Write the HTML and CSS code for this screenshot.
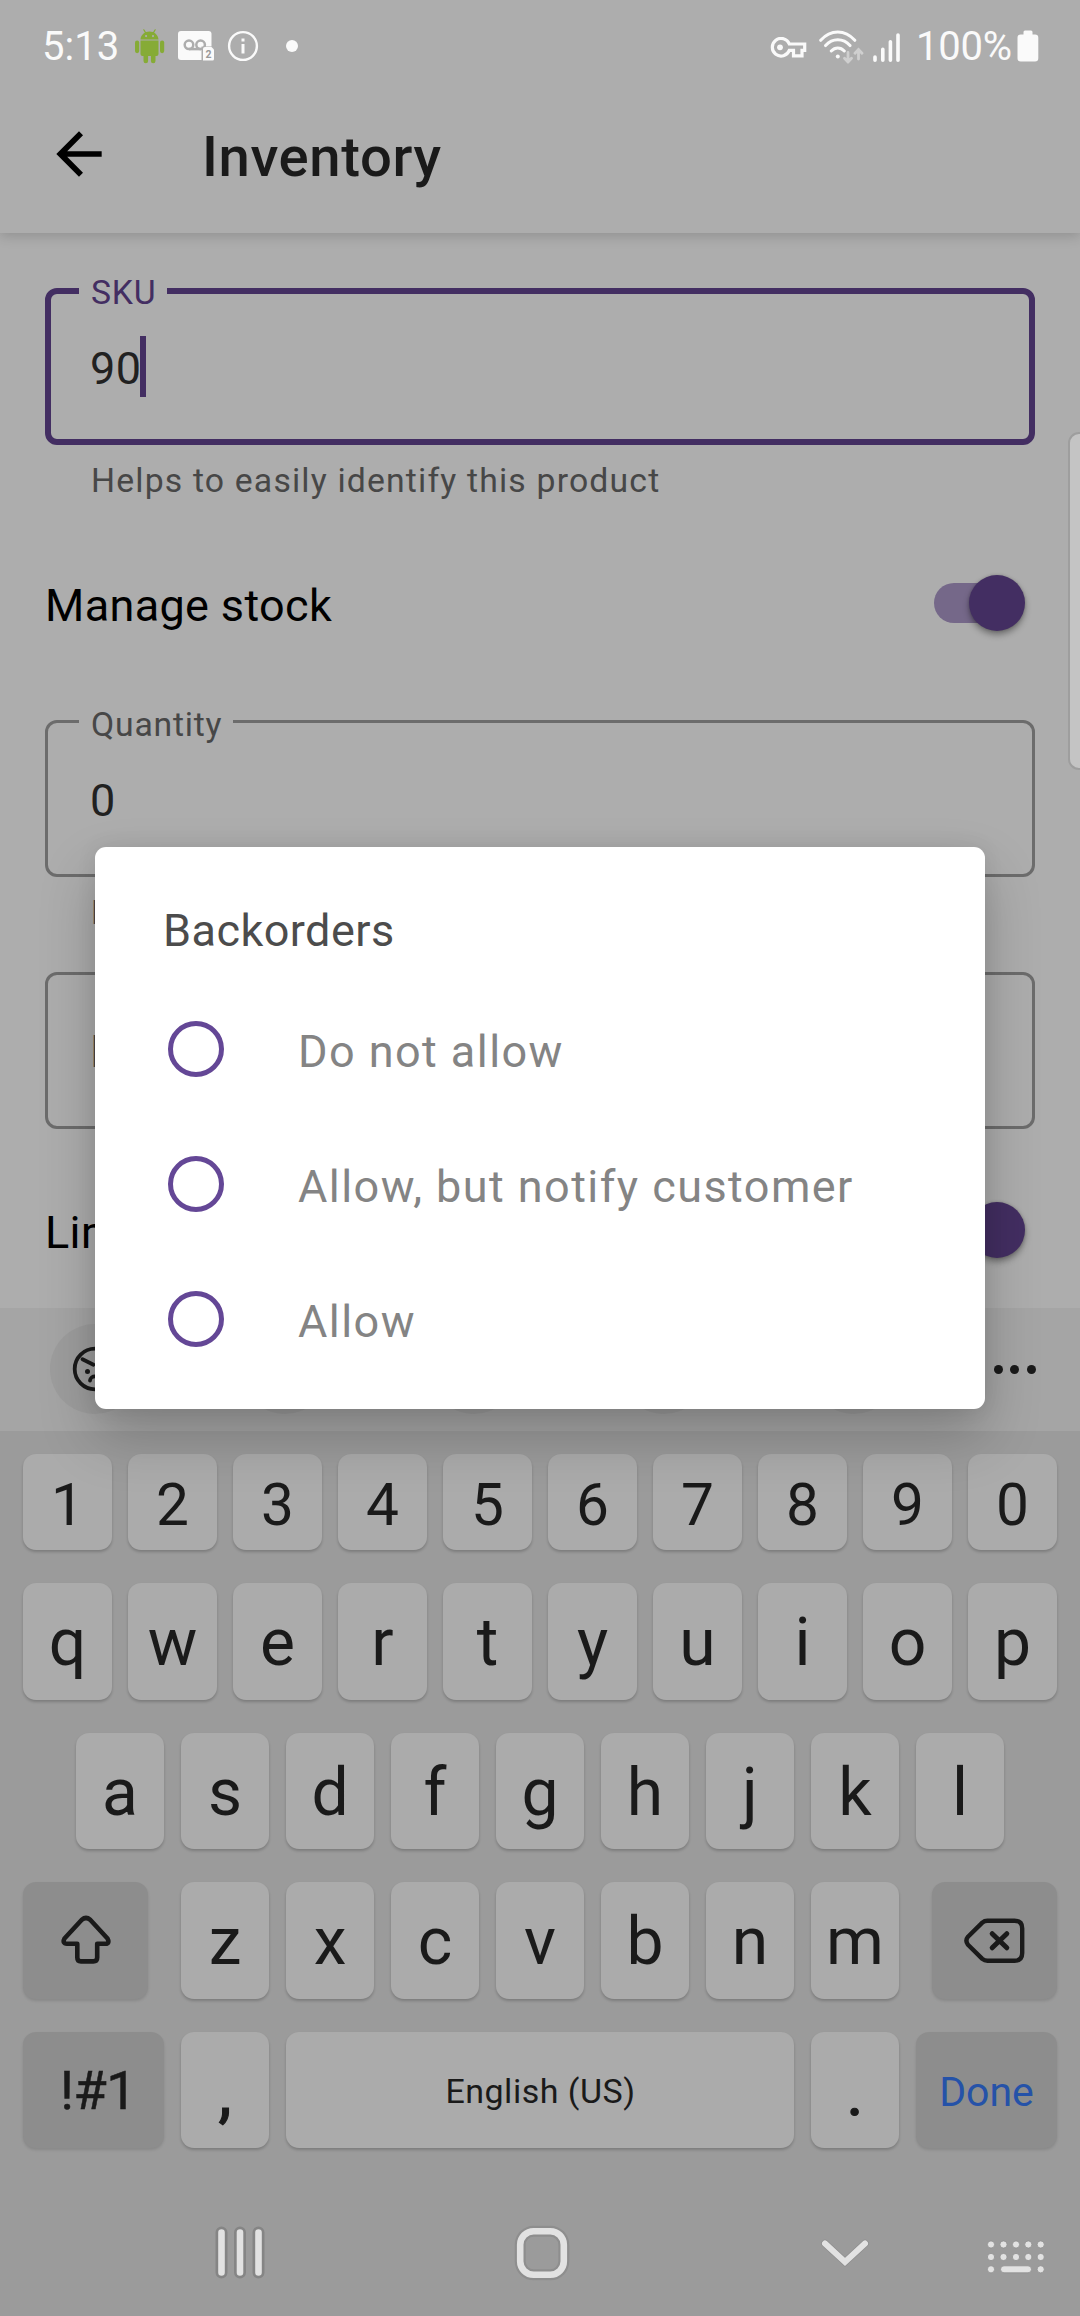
FILE: index.html
```html
<!DOCTYPE html>
<html lang="en">
<head>
<meta charset="utf-8">
<title>Inventory</title>
<link rel="stylesheet" href="styles.css">
</head>
<body>
<div class="screen">
  <header class="appbar">
    <div class="status">
      <span class="clock">5:13</span>
      <svg class="st-android" width="30" height="36" viewBox="0 0 30 36" fill="#86ab36">
        <path d="M8.8 1.8l2.2 3.6M20.2 1.8L18 5.400" stroke="#86ab36" stroke-width="1.200" stroke-linecap="round"/>
        <path fill-rule="evenodd" d="M5.500 11.600C5.800 6.800 9.700 3.500 14.500 3.500s8.700 3.300 9 8.100zM11.100 7a1.100 1.100 0 1 0 0 2.200 1.100 1.100 0 0 0 0-2.200zM18 7a1.100 1.100 0 1 0 0 2.200A1.100 1.100 0 0 0 18 7z"/>
        <path d="M5.500 12.600h18V26a2 2 0 0 1-2 2h-1v5a2.200 2.200 0 0 1-4.600 0v-5h-2.800v5a2.200 2.200 0 0 1-4.600 0v-5h-1a2 2 0 0 1-2-2z"/>
        <rect x="0" y="12.500" width="4.200" height="12.700" rx="2.100"/><rect x="25" y="12.500" width="4.200" height="12.700" rx="2.100"/>
      </svg>
      <svg class="st-vm" width="37" height="32" viewBox="0 0 37 32">
        <rect x="0" y="1" width="33.500" height="29" rx="3" fill="#fafafa"/>
        <g fill="none" stroke="#adadad" stroke-width="2.500"><circle cx="11" cy="14.800" r="4.300"/><circle cx="22.600" cy="14.800" r="4.300"/><path d="M11 19.100h12"/></g>
        <path d="M23.500 32V16.500H37V32z" fill="#adadad"/>
        <path d="M27 17h6.500l2.500 2.500V29a1.500 1.500 0 0 1-1.500 1.500H25V19a2 2 0 0 1 2-2z" fill="#fafafa"/>
        <text x="30.500" y="27.500" text-anchor="middle" class="vm-count">2</text>
      </svg>
      <svg class="st-info" width="32" height="32" viewBox="0 0 32 32">
        <circle cx="16" cy="16" r="13.900" fill="none" stroke="#fafafa" stroke-width="2.400"/>
        <path d="M14.500 8.500h3v3h-3zM14.500 14h3v9.600h-3z" fill="#fafafa"/>
      </svg>
      <i class="st-dot"></i>
      <svg class="st-key" width="37" height="22" viewBox="0 0 37 22" fill="none" stroke="#fafafa">
        <path d="M19.300 7H34.700v6.400H32V18.900h-8.500v-5.500h-4.200A8.800 8.800 0 1 1 19.300 7z" stroke-width="3.200"/>
        <circle cx="10" cy="10.300" r="2.900" fill="#fafafa" stroke="none"/>
      </svg>
      <svg class="st-wifi" width="45" height="34" viewBox="0 0 45 34" fill="none" stroke="#fafafa" stroke-width="3" stroke-linecap="round">
        <path d="M1.700 10.300C11.500-.8 26-.8 35.800 10.300M6.600 15.600c6.800-7.800 17.600-7.800 24.400 0M12.300 21c3.800-4 9.200-4 13 0"/>
        <circle cx="18.800" cy="26.600" r="2" fill="#fafafa" stroke="none"/>
        <path d="M29 22.500V32m-3.500-3.800L29 32l3.500-3.800M39.500 29V19.500M36 23.300l3.500-3.800 3.500 3.800" stroke="#cfcfcf" stroke-width="2.800"/>
      </svg>
      <svg class="st-signal" width="28" height="32" viewBox="0 0 28 32" fill="none" stroke="#fafafa" stroke-width="3.600" stroke-linecap="round">
        <path d="M2 26v3.200M9.800 18.200v11M17.400 10.700v18.500M25 4v25.200"/>
      </svg>
      <span class="battery-text">100%</span>
      <svg class="st-battery" width="22" height="33" viewBox="0 0 22 33" fill="#fafafa">
        <path d="M6.500 4.500V2A1.500 1.500 0 0 1 8 .5h6A1.500 1.500 0 0 1 15.500 2v2.500H18a3.300 3.300 0 0 1 3.300 3.300v20.500a3.300 3.300 0 0 1-3.300 3.300H3.800a3.300 3.300 0 0 1-3.300-3.300V7.800a3.300 3.300 0 0 1 3.300-3.300z"/>
      </svg>
    </div>
    <div class="toolbar">
      <svg class="back" width="68" height="68" viewBox="0 0 24 24"><path d="M20 11H7.830l5.590-5.590L12 4l-8 8 8 8 1.410-1.410L7.830 13H20z"/></svg>
      <h1>Inventory</h1>
    </div>
  </header>

  <main class="form">
    <div class="field focused"><span class="label">SKU</span><span class="value">90</span><i class="caret"></i></div>
    <p class="helper">Helps to easily identify this product</p>
    <div class="row"><span>Manage stock</span><div class="switch"><i class="track"></i><i class="thumb"></i></div></div>
    <div class="field"><span class="label">Quantity</span><span class="value">0</span></div>
    <p class="helper second">E</p>
    <div class="field select"><span class="value hint">B</span></div>
    <div class="row last"><span>Lim</span><div class="switch"><i class="track"></i><i class="thumb"></i></div></div>
    <i class="edge-handle"></i>
  </main>

  <section class="keyboard">
    <div class="kb-tools">
      <div class="tool">
        <svg width="46" height="46" viewBox="0 0 46 46" fill="none" stroke="#1a1a1a" stroke-width="3.800" stroke-linecap="round">
          <circle cx="23" cy="23" r="20.300"/><path d="M10.500 13.200l11 5.500M35.500 13.200l-11 5.500"/><path d="M18 34.500c.6-5.500 9.400-5.500 10 0"/>
          <circle cx="15.500" cy="25.500" r="2.500" fill="#1a1a1a" stroke="none"/><circle cx="30.500" cy="25.500" r="2.500" fill="#1a1a1a" stroke="none"/>
        </svg>
      </div>
      <div class="tool"></div><div class="tool"></div><div class="tool"></div><div class="tool"></div>
      <div class="more"><i></i><i></i><i></i></div>
    </div>
    <div class="keys digits"><b>1</b><b>2</b><b>3</b><b>4</b><b>5</b><b>6</b><b>7</b><b>8</b><b>9</b><b>0</b></div>
    <div class="keys"><b>q</b><b>w</b><b>e</b><b>r</b><b>t</b><b>y</b><b>u</b><b>i</b><b>o</b><b>p</b></div>
    <div class="keys home"><b>a</b><b>s</b><b>d</b><b>f</b><b>g</b><b>h</b><b>j</b><b>k</b><b>l</b></div>
    <div class="keys shift-row">
      <b class="dark">
        <svg width="52" height="52" viewBox="0 0 52 52" fill="none" stroke="#1a1a1a" stroke-width="4.600" stroke-linejoin="round"><path d="M21.800 4.800Q26 1.200 30.200 4.800L47.500 23.500Q50 28.500 45.500 28.700H37.200V42.500Q37.200 46.400 33.300 46.400H21Q17.300 46.400 17.300 42.500V28.700H7Q2 28.500 4.500 23.500z"/></svg>
      </b>
      <b>z</b><b>x</b><b>c</b><b>v</b><b>b</b><b>n</b><b>m</b>
      <b class="dark">
        <svg width="62" height="46" viewBox="0 0 62 46" fill="none" stroke="#1a1a1a" stroke-width="4.400" stroke-linecap="round" stroke-linejoin="round"><path d="M23.500 2.700H50.500Q58.200 2.700 58.200 10.400V35.100Q58.200 42.800 50.500 42.800H23.500Q20.500 42.800 18.300 40.900L4 26.800Q.8 22.700 4 18.700L18.300 4.600Q20.500 2.700 23.500 2.700z"/><path d="M28.200 15.700l14.600 14.100M42.800 15.700L28.200 29.800" stroke-width="5"/></svg>
      </b>
    </div>
    <div class="keys bottom-row">
      <b class="dark sym">!#1</b><b class="punct">,</b><b class="space">English (US)</b><b class="punct">.</b><b class="dark done">Done</b>
    </div>
  </section>

  <nav class="navbar">
    <svg class="nv-recents" width="52" height="56" viewBox="0 0 52 56" stroke-linecap="round">
      <path d="M7.500 7.500v40M26 7.500v40M44.500 7.500v40" stroke="#858585" stroke-width="12"/><path d="M7.500 7.500v40M26 7.500v40M44.500 7.500v40" stroke="#e2e2e2" stroke-width="6.600"/>
    </svg>
    <svg class="nv-home" width="56" height="56" viewBox="0 0 56 56" fill="none">
      <rect x="6.200" y="6.200" width="43.600" height="43.600" rx="13.500" stroke="#8e8e8e" stroke-width="11"/><rect x="6.200" y="6.200" width="43.600" height="43.600" rx="13.500" stroke="#e2e2e2" stroke-width="6.600"/>
    </svg>
    <svg class="nv-back" width="52" height="34" viewBox="0 0 52 34" fill="none" stroke-linecap="round">
      <path d="M6 6.500l20 18.500 20-18.500" stroke="#8e8e8e" stroke-width="7.500"/><path d="M6 6.500l20 18.500 20-18.500" stroke="#e2e2e2" stroke-width="6"/>
    </svg>
    <svg class="nv-kbd" width="60" height="36" viewBox="0 0 60 36" fill="#e2e2e2" stroke="#8e8e8e" stroke-width=".8">
      <circle cx="5" cy="5.500" r="3.600"/><circle cx="17.500" cy="5.500" r="3.600"/><circle cx="30" cy="5.500" r="3.600"/><circle cx="42.300" cy="5.500" r="3.600"/><circle cx="54.700" cy="5.500" r="3.600"/>
      <circle cx="5" cy="18" r="3.600"/><circle cx="17.500" cy="18" r="3.600"/><circle cx="30" cy="18" r="3.600"/><circle cx="42.300" cy="18" r="3.600"/><circle cx="54.700" cy="18" r="3.600"/>
      <circle cx="5" cy="30.300" r="3.600"/><rect x="14.500" y="26.800" width="31" height="7" rx="3.500"/><circle cx="54.700" cy="30.300" r="3.600"/>
    </svg>
  </nav>

  <div class="dialog" role="dialog">
    <h2>Backorders</h2>
    <div class="option"><i class="radio"></i><span>Do not allow</span></div>
    <div class="option"><i class="radio"></i><span>Allow, but notify customer</span></div>
    <div class="option"><i class="radio"></i><span>Allow</span></div>
  </div>
</div>
</body>
</html>
```
FILE: styles.css
```css
* { box-sizing: border-box; }
body { margin: 0; font-family: Roboto, "Liberation Sans", sans-serif; }
svg { display: block; flex: none; }
.screen {
  position: relative;
  display: flex;
  flex-direction: column;
  width: 1080px;
  height: 2316px;
  overflow: hidden;
  background: #adadad;
}

/* App bar */
.appbar {
  position: relative;
  height: 233px;
  flex: none;
  background: #adadad;
  box-shadow: 0 3px 12px rgba(0, 0, 0, .17);
}
.status {
  display: flex;
  align-items: center;
  height: 92px;
  padding: 0 41px 0 42px;
  color: #fafafa;
  font-size: 40px;
  line-height: 46px;
}
.clock, .battery-text { padding-top: 1px; }
.clock { width: 93px; }
.st-vm { margin-left: 13px; }
.st-info { margin-left: 12px; }
.vm-count { font: 700 10.500px Roboto, sans-serif; fill: #9a9a9a; }
.st-dot { width: 12px; height: 12px; margin-left: 27px; border-radius: 50%; background: #fafafa; }
.st-key { margin: 3px 0 0 auto; }
.st-wifi { margin: 2px 0 0 12px; }
.st-signal { margin: 1px 0 0 9px; }
.battery-text { margin-left: 15px; width: 101px; letter-spacing: -.2px; }
.toolbar { display: flex; align-items: center; height: 124px; padding-left: 45px; }
.toolbar h1 {
  margin: 5px 0 0 89px;
  font-size: 56.250px;
  font-weight: 500;
  line-height: 66px;
  letter-spacing: .6px;
  color: #1a1a1a;
}

/* Form */
.form { position: relative; height: 1075px; flex: none; padding: 55px 45px 0; }
.field {
  position: relative;
  display: flex;
  align-items: center;
  height: 157px;
  padding: 0 42px;
  border: 3px solid #6c6c6c;
  border-radius: 12px;
}
.field .label {
  position: absolute;
  left: 31px;
  top: -18px;
  padding: 0 11px 0 12px;
  background: #adadad;
  color: #474747;
  font-size: 33.750px;
  line-height: 40px;
  letter-spacing: .780px;
}
.value { font-size: 45px; line-height: 53px; letter-spacing: .4px; color: #212121; }
.value.hint { color: #474747; margin-top: 1px; }
.field.focused { padding: 0 39px; border: 6px solid #432e62; }
.focused .label { left: 28px; top: -21px; color: #432e62; }
.focused .value { padding-top: 3px; }
.field:not(.focused) .value:not(.hint) { padding-top: 3px; }
.caret { width: 6px; height: 61px; background: #432e62; margin-left: -1px; }
.helper {
  height: 40px;
  margin: 16px 0 0 46px;
  color: #474747;
  font-size: 33.750px;
  line-height: 40px;
  letter-spacing: 1.170px;
}
.row {
  display: flex;
  align-items: center;
  justify-content: space-between;
  height: 56px;
  margin: 76px 0 87px;
  padding-right: 10px;
  font-size: 45px;
  line-height: 53px;
  letter-spacing: .35px;
}
.helper.second { margin-top: 16px; }
.field.select { margin-top: 39px; }
.row.last { margin: 75px 0 0; }
.switch { display: flex; align-items: center; width: 91px; margin-top: -5px; }
.track { width: 84px; height: 40px; border-radius: 20px; background: #756889; }
.thumb {
  flex: none;
  width: 56px;
  height: 56px;
  margin-left: -49px;
  border-radius: 50%;
  background: #432e62;
  box-shadow: 0 4px 6px rgba(0, 0, 0, .35), 0 0 3px rgba(0, 0, 0, .2);
}
.edge-handle {
  position: absolute;
  left: 1068px;
  top: 199px;
  width: 30px;
  height: 338px;
  border: 2px solid #9e9e9e;
  border-radius: 11px;
  background: #c4c4c4;
}

/* Keyboard */
.keyboard { flex: none; height: 892px; background: #9b9b9b; }
.kb-tools {
  display: flex;
  align-items: center;
  height: 123px;
  padding: 0 44px 0 50px;
  background: #a5a5a5;
}
.tool {
  display: grid;
  place-items: center;
  width: 90px;
  height: 90px;
  margin: -2px 99.700px 0 0;
  border-radius: 50%;
  background: #9d9d9d;
}
.more { display: flex; gap: 7.700px; }
.more i { width: 9px; height: 9px; border-radius: 50%; background: #1a1a1a; }
.tool:nth-child(5) { margin-right: 95px; }
.keys {
  display: grid;
  grid-template-columns: repeat(10, 89px);
  column-gap: 16px;
  height: 117px;
  margin: 33px 0 0 23px;
}
.keys b {
  display: flex;
  align-items: center;
  justify-content: center;
  padding-top: 3px;
  border-radius: 13px;
  background: #ababab;
  box-shadow: 0 2px 3px rgba(0, 0, 0, .2);
  color: #1a1a1a;
  font-size: 66px;
  font-weight: 400;
  line-height: 78px;
}
.keys .dark { background: #8d8d8d; box-shadow: 0 2px 3px rgba(0, 0, 0, .12); }
.keys.digits { height: 96px; margin-top: 23px; }
.digits b { font-size: 58.600px; padding-top: 5px; }
.keys.home { grid-template-columns: repeat(9, 88px); column-gap: 17px; height: 116px; margin-left: 76px; }
.keys.shift-row { display: flex; gap: 17px; }
.shift-row b { width: 88px; }
.shift-row b.dark { width: 125px; padding: 0; }
.shift-row b.dark:first-child { margin-right: 16px; }
.shift-row b.dark:last-child { margin-left: 16px; }
.keys.bottom-row { grid-template-columns: 141px 88px 508px 88px 141px; column-gap: 17px; height: 116px; }
.keys .sym { font-size: 54px; padding: 1px 0 0 9px; letter-spacing: -.5px; -webkit-text-stroke: .5px #1a1a1a; }
.keys .punct { -webkit-text-stroke: 1.200px #1a1a1a; padding-top: 6px; }
.keys .space { font-size: 34px; letter-spacing: .5px; padding: 2px 0 0 1px; }
.keys .done { font-size: 41px; color: #2552a8; padding: 4px 0 0 0; }

/* Navigation bar */
.navbar { display: flex; flex: 1; background: #9b9b9b; padding-top: 25px; }
.nv-recents { margin: 0 0 0 214px; }
.nv-home { margin-left: 248px; }
.nv-back { margin: 12px 0 0 249px; }
.nv-kbd { margin: 14px 0 0 115px; }

/* Dialog */
.dialog {
  position: absolute;
  left: 95px;
  top: 847px;
  width: 890px;
  height: 562px;
  padding: 57px 68px 0;
  border-radius: 11px;
  background: #fff;
  box-shadow: 0 27px 56px rgba(0, 0, 0, .22), 0 0 20px rgba(0, 0, 0, .08);
}
.dialog h2 {
  margin: 0 0 3px;
  height: 74px;
  font-size: 45px;
  font-weight: 400;
  line-height: 53px;
  letter-spacing: .45px;
  color: #4c4c4c;
}
.option { display: flex; align-items: center; height: 135px; gap: 74px; padding-left: 5px; }
.radio { width: 56px; height: 56px; border: 5.600px solid #644796; border-radius: 50%; }
.option span { font-size: 45px; line-height: 53px; letter-spacing: 1.440px; color: #848484; padding-top: 6px; }
```
